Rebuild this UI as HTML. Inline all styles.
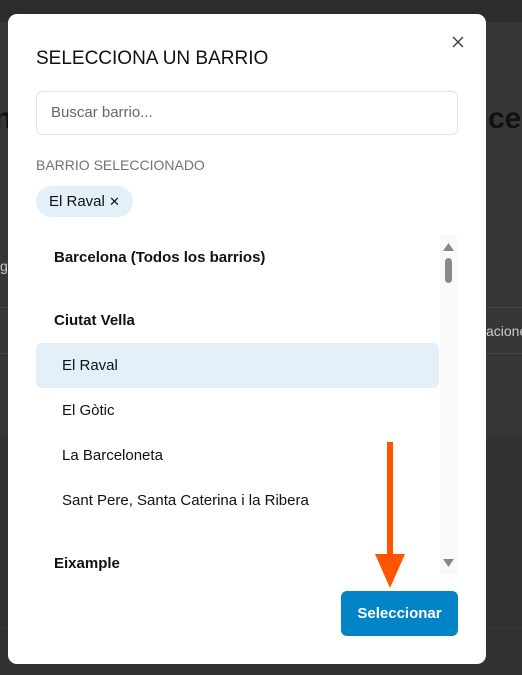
<!DOCTYPE html>
<html><head><meta charset="utf-8"><style>
*{box-sizing:border-box;margin:0;padding:0}
body{width:522px;height:675px;overflow:hidden;background:#313131;font-family:"Liberation Sans","DejaVu Sans",sans-serif;position:relative}
.bg1{position:absolute;left:0;top:0;width:522px;height:22px;background:#2c2c2c}
.bg2{position:absolute;left:0;top:22px;width:522px;height:415px;background:#363636}
.line{position:absolute;left:0;width:522px;height:1px;background:#444}
.bgt{position:absolute;color:#111;font-weight:bold;font-size:30px}
.modal{position:absolute;left:8px;top:14px;width:478px;height:650px;background:#fff;border-radius:9px}
.close{position:absolute;left:452px;top:36px;width:12px;height:12px}
h1{position:absolute;left:36px;top:48px;font-size:19px;font-weight:normal;color:#111;letter-spacing:0}
.search{position:absolute;left:36px;top:91px;width:422px;height:44px;border:1px solid #e2e2e2;border-radius:6px;padding:0 14px;line-height:42px;font-size:15px;color:#666}
.lbl{position:absolute;left:36px;top:157px;font-size:14px;color:#6b7280}
.chip{position:absolute;left:36px;top:186px;width:97px;height:31px;border-radius:16px;background:#e3eff9;font-size:15px;color:#111;line-height:31px;padding-left:13px}
.list{position:absolute;left:36px;top:235px;width:404px;height:340px;overflow:hidden;font-size:15px;color:#111}
.it{position:absolute;left:0;width:403px;height:45px;line-height:45px}
.b{font-weight:bold;padding-left:18px}
.n{padding-left:26px}
.sel{background:#e3eff9;border-radius:6px}
.sb{position:absolute;left:440px;top:235px;width:17px;height:340px;background:#f9f9f9}
.btn{position:absolute;left:341px;top:591px;width:117px;height:45px;border-radius:6px;background:#0284c7;color:#fff;font-weight:bold;font-size:15px;text-align:center;line-height:45px}
</style></head><body>
<div class="bg1"></div><div class="bg2"></div>
<div class="line" style="top:307px"></div><div class="line" style="top:353px"></div>
<div class="line" style="top:627px;background:#3a3a3a"></div>
<div class="bgt" style="left:-6px;top:102px">n</div>
<div class="bgt" style="left:488px;top:102px">cel</div>
<div style="position:absolute;left:0;top:258px;color:#ccc;font-size:14px">g</div>
<div style="position:absolute;left:486px;top:323px;color:#ccc;font-size:14px">acione</div>
<div class="modal"></div>
<svg class="close" viewBox="0 0 12 12"><path d="M1 1L11 11M11 1L1 11" stroke="#444" stroke-width="1.5"/></svg>
<h1>SELECCIONA UN BARRIO</h1>
<div class="search">Buscar barrio...</div>
<div class="lbl">BARRIO SELECCIONADO</div>
<div class="chip">El Raval <span style="font-size:13px">✕</span></div>
<div class="list">
<div class="it b" style="top:0">Barcelona (Todos los barrios)</div>
<div class="it b" style="top:63px">Ciutat Vella</div>
<div class="it n sel" style="top:108px">El Raval</div>
<div class="it n" style="top:153px">El Gòtic</div>
<div class="it n" style="top:198px">La Barceloneta</div>
<div class="it n" style="top:243px">Sant Pere, Santa Caterina i la Ribera</div>
<div class="it b" style="top:306px">Eixample</div>
</div>
<div class="sb"></div>
<svg style="position:absolute;left:440px;top:235px" width="17" height="340">
<path d="M3 16L8.5 8L14 16Z" fill="#888"/>
<rect x="5" y="23" width="7" height="25" rx="3.5" fill="#8a8a8a"/>
<path d="M3 324L8.5 332L14 324Z" fill="#888"/>
</svg>
<svg style="position:absolute;left:372px;top:442px" width="36" height="148">
<rect x="15" y="0" width="6" height="115" fill="#ff5500"/>
<path d="M3 112L33 112L18 146Z" fill="#ff5500"/>
</svg>
<div class="btn">Seleccionar</div>
</body></html>
